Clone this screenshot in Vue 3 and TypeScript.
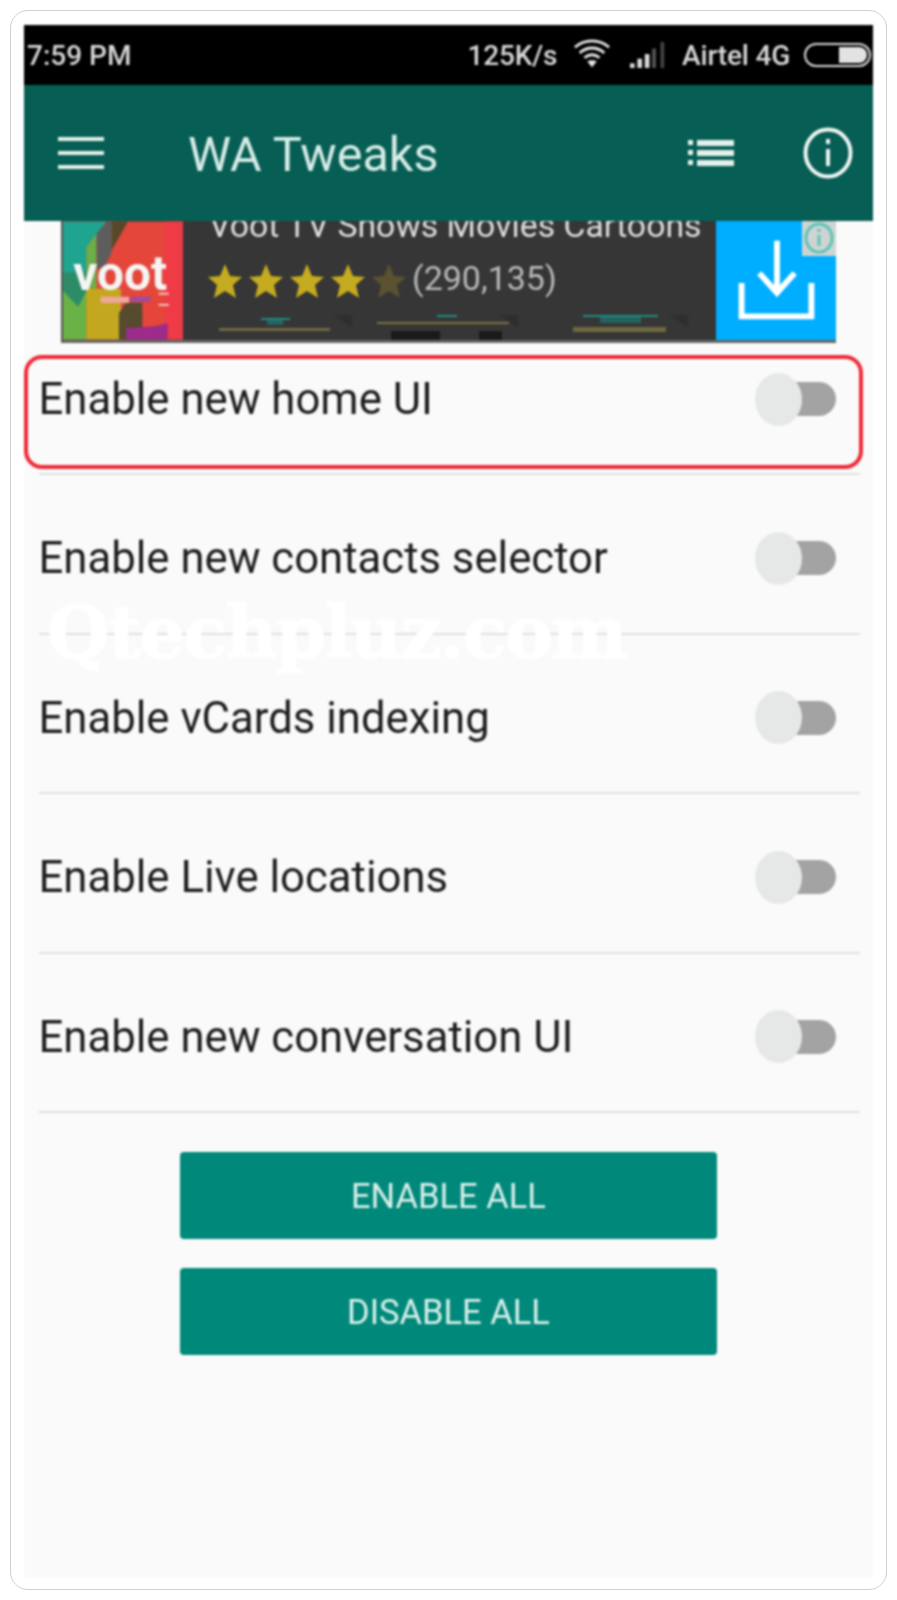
<template>
  <div class="page">
    <div class="card">
      <div class="screen">
        <div class="status">
          <span class="clock">7:59 PM</span>
          <div class="status-right">
            <span class="speed">125K/s</span>
            <svg class="wifi" viewBox="0 0 40 32" fill="none" stroke="#e4e4e4" stroke-width="3">
              <path d="M2 10 C12 1 28 1 38 10" />
              <path d="M7 16 C15 9 25 9 33 16" />
              <path d="M12 21 C17 17 23 17 28 21" />
              <path d="M20 31 L15 25 C18 23 22 23 25 25 Z" fill="#e4e4e4" stroke="none" />
            </svg>
            <svg class="signal" viewBox="0 0 40 30">
              <rect x="0" y="24" width="5" height="5" fill="#ddd" />
              <rect x="8" y="19" width="5" height="10" fill="#ddd" />
              <rect x="16" y="14" width="5" height="15" fill="#ddd" />
              <rect x="24" y="8" width="4" height="21" fill="#555" />
              <rect x="33" y="1" width="4" height="28" fill="#444" />
            </svg>
            <span class="carrier">Airtel 4G</span>
            <div class="battery"><div class="battery-fill"></div></div>
          </div>
        </div>

        <div class="appbar">
          <div class="hamburger"><i></i><i></i><i></i></div>
          <h1 class="title">WA Tweaks</h1>
          <svg class="list-icon" viewBox="0 0 46 26" fill="#e4f0ec">
            <rect x="0" y="0" width="5" height="5" />
            <rect x="9" y="0" width="37" height="6" />
            <rect x="0" y="10" width="5" height="5" />
            <rect x="9" y="10" width="37" height="6" />
            <rect x="0" y="20" width="5" height="5" />
            <rect x="9" y="20" width="37" height="6" />
          </svg>
          <svg class="info-icon" viewBox="0 0 50 52" fill="none" stroke="#eef5f3" stroke-width="4">
            <ellipse cx="25" cy="26" rx="22.5" ry="23.5" />
            <path d="M25 22 V39" />
            <path d="M25 12 V17" />
          </svg>
        </div>

        <div class="ad">
          <svg class="ad-logo" viewBox="0 0 118 116">
            <rect width="118" height="116" fill="#e4463a" />
            <rect x="100" width="18" height="116" fill="#ee3b46" />
            <path d="M0 0 H43 L23 25 V55 H0 Z" fill="#1fa48f" />
            <path d="M0 50 H23 V70 L15 84 L0 70 Z" fill="#2c8c68" />
            <path d="M0 68 L15 84 L23 68 V116 H0 Z" fill="#69b246" />
            <path d="M23 25 L33 12 V66 H23 Z" fill="#6cae48" />
            <path d="M33 12 L43 0 H48 V30 L40 46 H33 Z" fill="#5d5d5d" />
            <path d="M48 0 H64 L48 28 Z" fill="#56492a" />
            <path d="M23 66 H57 V116 H23 Z" fill="#c3a81f" />
            <path d="M55 90 L62 80 H78 V116 H55 Z" fill="#564a2f" />
            <path d="M62 105 L90 103 L103 100 V116 H62 Z" fill="#9c2b8b" />
            <rect x="37" y="74" width="28" height="6" fill="#f0a79c" />
            <rect x="66" y="74" width="20" height="5" fill="#a04a9c" />
            <rect x="94" y="70" width="10" height="2" fill="#f3c6c0" />
            <rect x="94" y="81" width="10" height="2" fill="#f3c6c0" />
            <text x="10" y="67" class="voot">voot</text>
          </svg>

          <div class="ad-body">
            <div class="ad-title">Voot TV Shows Movies Cartoons</div>
            <div class="ad-rating">
              <svg v-for="(star, i) in stars" :key="i" class="star" viewBox="0 0 36 36" :fill="star">
                <path d="M18 1 L23 13 L35 14 L26 22 L29 35 L18 28 L7 35 L10 22 L1 14 L13 13 Z" />
              </svg>
              <span class="ad-count">(290,135)</span>
            </div>
            <svg class="ad-strip" viewBox="0 0 533 25">
              <path d="M149 -1 H169 V13 Z" fill="#2e2e2e" />
              <path d="M315 -1 H335 V13 Z" fill="#2e2e2e" />
              <path d="M485 -1 H505 V13 Z" fill="#2e2e2e" />
              <rect x="208" y="16" width="49" height="9" fill="#1a1a1a" />
              <rect x="296" y="16" width="23" height="9" fill="#1a1a1a" />
              <rect x="78" y="3" width="29" height="2" fill="#1e8d82" />
              <rect x="84" y="5" width="16" height="5" fill="#25635f" />
              <rect x="254" y="0" width="20" height="2" fill="#1e8d82" />
              <rect x="400" y="0" width="75" height="2" fill="#1e8d82" />
              <rect x="417" y="2" width="41" height="6" fill="#25635f" />
              <rect x="36" y="13" width="111" height="3" fill="#6f6840" />
              <rect x="194" y="7" width="132" height="2" fill="#7d7340" />
              <rect x="390" y="12" width="93" height="5" fill="#6f6840" />
            </svg>
          </div>

          <div class="ad-action">
            <svg viewBox="0 0 120 121" fill="none" stroke="#fff" stroke-width="6">
              <path d="M61 20 V72" />
              <path d="M43 53 L61 73 L79 53" />
              <path d="M25 63 V97 H96 V63" />
            </svg>
            <div class="ad-badge">
              <svg viewBox="0 0 34 35" fill="none" stroke="#5cc4b4" stroke-width="3">
                <ellipse cx="17" cy="17" rx="13" ry="14" />
                <path d="M17 14 V25 M17 8 V11" />
              </svg>
            </div>
          </div>
        </div>

        <div class="list">
          <div v-for="(item, i) in tweaks" :key="item" class="item" :class="{ 'item-first': i === 0 }">
            <span class="label">{{ item }}</span>
            <div class="toggle">
              <div class="toggle-track"></div>
              <div class="toggle-knob"></div>
            </div>
            <div v-if="i === 0" class="highlight"></div>
          </div>
        </div>

        <div class="actions">
          <button class="action" type="button">ENABLE ALL</button>
          <button class="action" type="button">DISABLE ALL</button>
        </div>

        <div class="watermark">Qtechpluz.com</div>
      </div>
    </div>
  </div>
</template>

<script setup lang="ts">
const tweaks: string[] = [
  'Enable new home UI',
  'Enable new contacts selector',
  'Enable vCards indexing',
  'Enable Live locations',
  'Enable new conversation UI'
]

const stars: string[] = ['#c4ab1f', '#c4ab1f', '#c4ab1f', '#c4ab1f', '#5b5230']
</script>

<style scoped>
.page {
  box-sizing: border-box;
  width: 897px;
  height: 1600px;
  padding: 10px;
  background: #fff;
  font-family: Roboto, "Liberation Sans", sans-serif;
}

.card {
  box-sizing: border-box;
  height: 1580px;
  padding: 14px 13px 12px;
  border: 1.5px solid #cfcfcf;
  border-radius: 18px;
}

.screen {
  position: relative;
  display: flex;
  flex-direction: column;
  height: 100%;
  overflow: hidden;
  background: #fafafa;
  filter: blur(0.8px);
}

.status {
  display: flex;
  flex: none;
  align-items: center;
  justify-content: space-between;
  height: 60px;
  padding: 0 2px 0 3px;
  background: #000;
  color: #d8d8d8;
  font-size: 28px;
  font-weight: 500;
}

.status-right {
  display: flex;
  align-items: center;
}

.speed {
  letter-spacing: -0.2px;
}

.wifi {
  width: 38px;
  height: 32px;
  margin-left: 16px;
  margin-bottom: 4px;
}

.signal {
  width: 37px;
  height: 30px;
  margin-left: 19px;
}

.carrier {
  margin-left: 15px;
  letter-spacing: -0.2px;
}

.battery {
  display: flex;
  justify-content: flex-end;
  box-sizing: border-box;
  width: 67px;
  height: 24px;
  margin-left: 14px;
  padding: 2px;
  border: 2px solid #d8d8d8;
  border-radius: 12px;
}

.battery-fill {
  width: 28px;
  border-radius: 0 8px 8px 0;
  background: #e2e2e2;
}

.appbar {
  display: flex;
  flex: none;
  align-items: center;
  height: 136px;
  padding: 0 20px 0 34px;
  background: #075e54;
}

.hamburger {
  display: flex;
  flex-direction: column;
  gap: 10px;
  width: 46px;
}

.hamburger i {
  display: block;
  height: 4px;
  background: #e4f0ec;
}

.title {
  flex: 1;
  margin: 2px 0 0 84px;
  color: #d6ece7;
  font-size: 48.5px;
  font-weight: 400;
}

.list-icon {
  width: 46px;
  height: 26px;
  margin-right: 69px;
}

.info-icon {
  width: 50px;
  height: 52px;
}

.ad {
  display: flex;
  flex: none;
  box-sizing: border-box;
  height: 122px;
  margin: 0 37px 0 37px;
  overflow: hidden;
  border-left: 2px solid #555;
  border-bottom: 3px solid #666;
  background: #363636;
}

.ad-logo {
  flex: none;
  width: 120px;
  height: 119px;
}

.voot {
  fill: #f5f5f5;
  font-family: Roboto, "Liberation Sans", sans-serif;
  font-size: 47px;
  font-weight: 700;
}

.ad-body {
  display: flex;
  flex: 1;
  flex-direction: column;
  min-width: 0;
}

.ad-title {
  margin: -13px 0 0 26px;
  color: #dedede;
  font-size: 33.8px;
  line-height: 36px;
  white-space: nowrap;
}

.ad-rating {
  display: flex;
  align-items: center;
  gap: 5px;
  margin: 19px 0 0 24px;
}

.star {
  width: 36px;
  height: 36px;
}

.ad-count {
  margin-top: -7px;
  color: #b8b8b8;
  font-size: 34px;
}

.ad-strip {
  display: block;
  margin-top: auto;
  height: 25px;
  flex: none;
}

.ad-action {
  position: relative;
  flex: none;
  width: 120px;
  background: #00aeff;
}

.ad-action > svg {
  display: block;
  width: 120px;
  height: 119px;
}

.ad-badge {
  position: absolute;
  top: 0;
  right: 0;
  width: 34px;
  height: 35px;
  background: #cfd4d3;
}

.ad-badge svg {
  display: block;
  width: 100%;
  height: 100%;
}

.list {
  display: flex;
  flex: none;
  flex-direction: column;
}

.item {
  position: relative;
  display: flex;
  flex: none;
  align-items: center;
  justify-content: space-between;
  box-sizing: border-box;
  height: 159.5px;
  margin: 0 13px 0 14.5px;
  padding: 9px 24px 0 0;
  border-bottom: 2px solid #dfe2e1;
}

.item-first {
  height: 120px;
  margin-top: 12px;
  padding: 0 24px 30px 0;
}

.label {
  color: #1d1d1d;
  font-size: 43.7px;
}

.toggle {
  position: relative;
  display: flex;
  align-items: center;
  justify-content: flex-end;
  width: 81px;
  height: 53px;
}

.toggle-track {
  width: 50px;
  height: 34px;
  border-radius: 0 17px 17px 0;
  background: #a3a3a3;
}

.toggle-knob {
  position: absolute;
  top: 0;
  left: 0;
  width: 47px;
  height: 53px;
  border-radius: 50%;
  background: #e6e7e7;
}

.highlight {
  position: absolute;
  top: 0;
  right: -3px;
  bottom: 4px;
  left: -15px;
  border: 4.5px solid #ee2a38;
  border-radius: 18px;
  pointer-events: none;
}

.actions {
  display: flex;
  flex-direction: column;
  align-items: center;
  gap: 29px;
  margin-top: 39px;
}

.action {
  width: 537px;
  height: 87px;
  border: 0;
  border-radius: 4px;
  background: #00897b;
  color: #d9efea;
  font-family: inherit;
  font-size: 34.5px;
  font-weight: 400;
}

.watermark {
  position: absolute;
  top: 565px;
  left: 23px;
  color: #fff;
  font-family: "DejaVu Serif", serif;
  font-size: 72px;
  font-weight: 700;
  letter-spacing: -1.8px;
  white-space: nowrap;
  -webkit-text-stroke: 1px #fff;
}
</style>
